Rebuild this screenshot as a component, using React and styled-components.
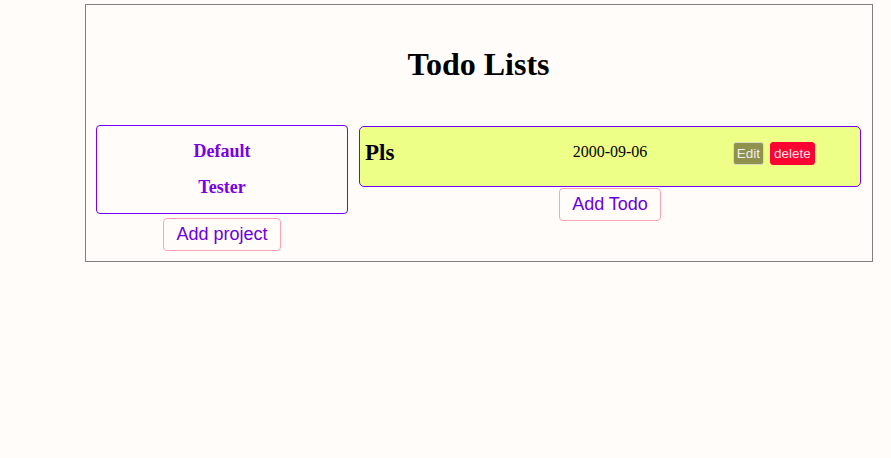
import React from "react";
import styled, { createGlobalStyle } from "styled-components";

const GlobalStyle = createGlobalStyle`
    body {
        margin: 0;
        background-color: #fffcfa;
        font-family: "Liberation Serif", serif;
    }
`;

const Page = styled.div`
    width: 891px;
    height: 458px;
    padding-top: 4px;
    box-sizing: border-box;
`;

const Container = styled.div`
    margin-left: 85px;
    width: 788px;
    height: 258px;
    box-sizing: border-box;
    border: 1px solid #808080;
    padding: 0 11px 0 10px;
`;

const Title = styled.h1`
    margin: 0;
    padding-top: 41px;
    height: 37px;
    line-height: 37px;
    font-size: 32px;
    text-align: center;
    color: #000;
    margin-bottom: 42px;
`;

const Columns = styled.div`
    display: grid;
    grid-template-columns: 252px 502px;
    column-gap: 11px;
    align-items: start;
`;

const Column = styled.div`
    display: flex;
    flex-direction: column;
    align-items: center;
    padding-top: ${props => props.$top || 0}px;
`;

const ProjectBox = styled.div`
    width: 100%;
    box-sizing: border-box;
    height: 89px;
    border: 1px solid #7000ff;
    border-radius: 4px;
    display: flex;
    flex-direction: column;
    align-items: center;
    padding-top: 15px;
    gap: 15px;
`;

const Project = styled.div`
    font-size: 18px;
    font-weight: bold;
    line-height: 21px;
    color: #7a00e6;
`;

const AddButton = styled.button`
    margin-top: ${props => props.$top}px;
    height: ${props => props.$height}px;
    padding: 0 12px;
    background: #fffcfa;
    border: 1px solid #ffa3b5;
    border-radius: 4px;
    font-family: "Liberation Sans", Arial, sans-serif;
    font-size: 18px;
    color: #6a00e0;
`;

const TodoCard = styled.div`
    width: 100%;
    box-sizing: border-box;
    height: 61px;
    border: 1px solid #7000ff;
    border-radius: 5px;
    background: #eeff88;
    display: grid;
    grid-template-columns: 1fr 1fr 1fr;
    align-items: start;
    padding-top: 13px;
`;

const TodoName = styled.h2`
    margin: 0;
    padding-left: 5px;
    font-size: 23px;
    line-height: 26px;
    font-weight: bold;
    color: #000;
`;

const TodoDate = styled.div`
    text-align: center;
    font-size: 16px;
    line-height: 24px;
    color: #000;
`;

const Actions = styled.div`
    display: flex;
    justify-content: center;
    gap: 6px;
    padding-top: 2px;
    padding-right: 6px;
`;

const SmallButton = styled.button`
    height: 23px;
    padding: 0 3px;
    border-radius: 3px;
    font-family: "Liberation Sans", Arial, sans-serif;
    font-size: 13.5px;
    color: ${props => props.$danger ? "#ffe0e6" : "#eeeeee"};
    background: ${props => props.$danger ? "#ff0033" : "#8f914f"};
    border: 1px solid ${props => props.$danger ? "#ff0033" : "#d8dcc0"};
`;

const App = () => {
    return (
        <Page>
            <GlobalStyle />
            <Container>
                <Title>Todo Lists</Title>
                <Columns>
                    <Column>
                        <ProjectBox>
                            <Project>Default</Project>
                            <Project>Tester</Project>
                        </ProjectBox>
                        <AddButton $top={4} $height={33}>Add project</AddButton>
                    </Column>
                    <Column $top={1}>
                        <TodoCard>
                            <TodoName>Pls</TodoName>
                            <TodoDate>2000-09-06</TodoDate>
                            <Actions>
                                <SmallButton>Edit</SmallButton>
                                <SmallButton $danger>delete</SmallButton>
                            </Actions>
                        </TodoCard>
                        <AddButton $top={1} $height={33}>Add Todo</AddButton>
                    </Column>
                </Columns>
            </Container>
        </Page>
    );
};

export default App;
